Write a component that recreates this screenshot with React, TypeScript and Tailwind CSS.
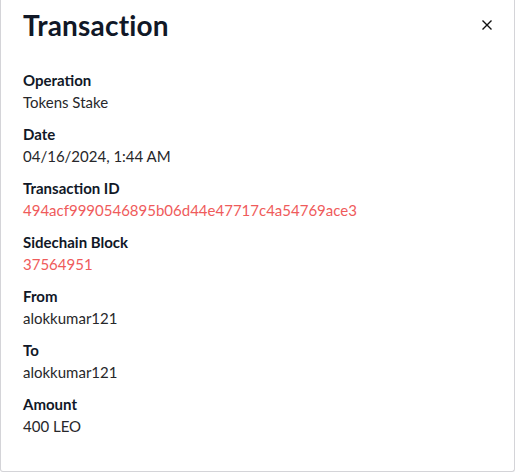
const rows: { label: string; value: string; link?: boolean }[] = [
  { label: "Operation", value: "Tokens Stake" },
  { label: "Date", value: "04/16/2024, 1:44 AM" },
  { label: "Transaction ID", value: "494acf9990546895b06d44e47717c4a54769ace3", link: true },
  { label: "Sidechain Block", value: "37564951", link: true },
  { label: "From", value: "alokkumar121" },
  { label: "To", value: "alokkumar121" },
  { label: "Amount", value: "400 LEO" },
];

export default function App() {
  return (
    <div className="w-[516px] h-[472px] bg-white font-['Lato',sans-serif]">
      <div className="w-[515px] h-[472px] border-l border-b border-r border-[#d4d4d8] rounded-b-[3px] pl-[22px] pr-[21px]">
        {/* Header */}
        <div className="flex items-center justify-between h-[48px] pt-[1px]">
          <h1 className="text-[28px] font-bold text-[#111827] tracking-[0.2px]">Transaction</h1>
          <button className="w-[12px] h-[12px] text-[#111]">
            <svg viewBox="0 0 12 12" width="12" height="12" fill="none" stroke="currentColor" strokeWidth="1.4">
              <path d="M1.5 1.5 L10.5 10.5 M10.5 1.5 L1.5 10.5" />
            </svg>
          </button>
        </div>

        {/* Details */}
        <div className="mt-[21px] flex flex-col gap-[10px]">
          {rows.map((r) => (
            <div key={r.label} className="flex flex-col">
              <div className="text-[15px] leading-[22px] font-bold text-[#111827]">{r.label}</div>
              <div
                className={
                  "text-[15px] leading-[22px] " + (r.link ? "text-[#ef5b5b]" : "text-[#27272a]")
                }
              >
                {r.value}
              </div>
            </div>
          ))}
        </div>
      </div>
    </div>
  );
}
